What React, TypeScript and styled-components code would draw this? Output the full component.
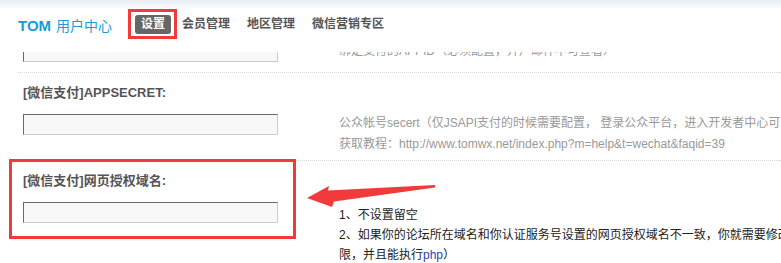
import React from 'react'
import styled, { createGlobalStyle } from 'styled-components'

const GlobalStyle = createGlobalStyle`
  html, body {
    margin: 0;
    padding: 0;
    background: #fff;
    overflow: hidden;
  }
  body {
    font-family: "Liberation Sans", "Noto Sans CJK SC", sans-serif;
  }
`

const Page = styled.div`
  width: 781px;
  height: 263px;
  overflow: hidden;
  display: flex;
  flex-direction: column;
`

const Header = styled.div`
  height: 52px;
  box-sizing: border-box;
  padding: 0 0 3px 18px;
  flex: none;
  display: flex;
  align-items: center;
  background: linear-gradient(#e8edf3 0px, #ffffff 10px);
  position: relative;
  z-index: 2;
`

const Brand = styled.div`
  color: #1a9bd7;
  font-size: 14px;
  white-space: nowrap;
  margin-right: 23px;

  b {
    font-size: 15px;
    font-weight: bold;
    margin-right: 5px;
  }
`

const Nav = styled.div`
  display: flex;
  align-items: center;
  gap: 5px;
`

const NavItem = styled.div<{ $active?: boolean }>`
  position: relative;
  height: 19px;
  line-height: 19px;
  padding: 0 6px;
  font-size: 12px;
  font-weight: bold;
  white-space: nowrap;
  color: ${(p) => (p.$active ? '#fff' : '#555')};
  background: ${(p) => (p.$active ? '#666' : 'transparent')};
  border-radius: 3px;
`

/* red annotation drawn over the screenshot */
const Mark = styled.span<{ $t: number; $l: number; $w: number; $h: number }>`
  position: absolute;
  top: ${(p) => p.$t}px;
  left: ${(p) => p.$l}px;
  width: ${(p) => p.$w}px;
  height: ${(p) => p.$h}px;
  box-sizing: border-box;
  border: 3px solid #f23a3a;
  pointer-events: none;
`

const Scroller = styled.div`
  flex: 1;
  overflow: hidden;
`

// page is scrolled so the first setting row sits under the header
const List = styled.div`
  margin-top: -52px;
`

const Row = styled.div<{ $first?: boolean }>`
  position: relative;
  display: flex;
  margin-left: 18px;
  border-top: ${(p) => (p.$first ? 'none' : '1px dotted #d6d6d6')};
`

const FieldCell = styled.div<{ $pb: number }>`
  position: relative;
  flex: none;
  width: 316px;
  padding: 10px 0 ${(p) => p.$pb}px 5px;
`

const Label = styled.div`
  height: 20px;
  line-height: 20px;
  font-size: 13px;
  font-weight: bold;
  color: #555;
  white-space: nowrap;
  margin-bottom: 11px;
`

const Input = styled.div`
  width: 255px;
  height: 21px;
  box-sizing: border-box;
  background: #f8f8f8;
  border: 1px solid;
  border-color: #6a6a6a #cccccc #cccccc #6a6a6a;
`

const Desc = styled.div<{ $pt: number; $lh: number; $dark?: boolean }>`
  padding-top: ${(p) => p.$pt}px;
  font-size: 12px;
  line-height: ${(p) => p.$lh}px;
  color: ${(p) => (p.$dark ? '#222' : '#999')};
  white-space: nowrap;
`

const Code = styled.span`
  color: #2a45b0;
`

const Arrow = styled.svg`
  position: absolute;
  left: 289px;
  top: 22px;
  overflow: visible;
`

export default function App() {
  return (
    <Page>
      <GlobalStyle />
      <Header>
        <Brand>
          <b>TOM</b>用户中心
        </Brand>
        <Nav>
          <NavItem $active>
            设置
            <Mark $t={-6} $l={-7} $w={49} $h={30} />
          </NavItem>
          <NavItem>会员管理</NavItem>
          <NavItem>地区管理</NavItem>
          <NavItem>微信营销专区</NavItem>
        </Nav>
      </Header>
      <Scroller>
        <List>
          <Row $first>
            <FieldCell $pb={10}>
              <Label>[微信支付]APPID:</Label>
              <Input />
            </FieldCell>
            <Desc $pt={41} $lh={21}>
              绑定支付的APPID（必须配置，开户邮件中可查看）
            </Desc>
          </Row>
          <Row>
            <FieldCell $pb={25}>
              <Label>[微信支付]APPSECRET:</Label>
              <Input />
            </FieldCell>
            <Desc $pt={40} $lh={21}>
              公众帐号secert（仅JSAPI支付的时候需要配置， 登录公众平台，进入开发者中心可以查看）
              <br />
              获取教程：http://www.tomwx.net/index.php?m=help&amp;t=wechat&amp;faqid=39
            </Desc>
          </Row>
          <Row>
            <FieldCell $pb={25}>
              <Label>[微信支付]网页授权域名:</Label>
              <Input />
              <Mark $t={-2} $l={-9} $w={287} $h={80} />
            </FieldCell>
            <Desc $pt={44} $lh={20} $dark>
              1、不设置留空
              <br />
              2、如果你的论坛所在域名和你认证服务号设置的网页授权域名不一致，你就需要修改网页授权域名对应目录的读写权
              <br />
              限，并且能执行<Code>php</Code>）
            </Desc>
            <Arrow width="130" height="26" viewBox="0 0 130 26">
              <polygon
                points="0,15 22,3 21,7.5 128,2 128,4.5 27,18.5 25,24"
                fill="#f23a3a"
              />
            </Arrow>
          </Row>
        </List>
      </Scroller>
    </Page>
  )
}
